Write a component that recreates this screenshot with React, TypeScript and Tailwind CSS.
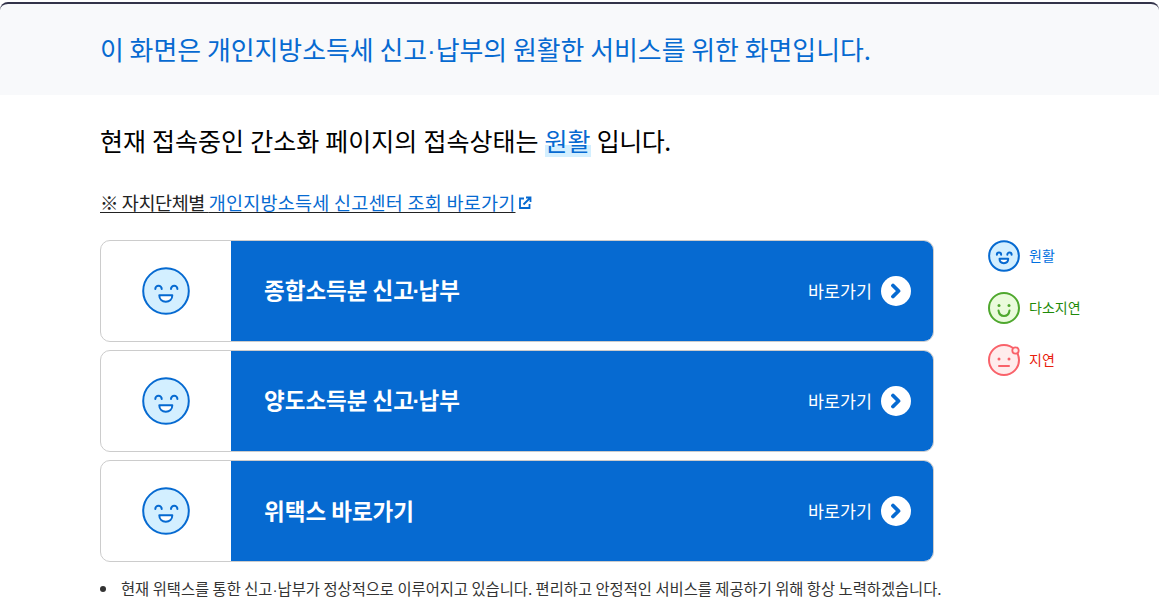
import React from "react";

const FONT = { fontFamily: '"Noto Sans CJK KR", "Noto Sans", sans-serif' };

function Dot({ tight = false }: { tight?: boolean }) {
  return <span className={tight ? "-mx-[1.500px] font-['Liberation_Sans']" : "font-['Liberation_Sans']"}>·</span>;
}

function Happy({ size, stroke = 2 }: { size: number; stroke?: number }) {
  return (
    <svg width={size} height={size} viewBox="0 0 48 48" fill="none">
      <circle cx="24" cy="24" r={24 - stroke / 2 - 0.2} fill="#d3efff" stroke="#066ad1" strokeWidth={stroke} />
      <path d="M13.300 22a3.200 3.200 0 0 1 6.400 0M29 22a3.200 3.200 0 0 1 6.400 0" stroke="#066ad1" strokeWidth={stroke} strokeLinecap="round" />
      <path d="M17.300 28.300h13c0 4-2.900 6.400-6.500 6.400s-6.500-2.400-6.500-6.400z" fill="#fff" stroke="#066ad1" strokeWidth={stroke} strokeLinejoin="round" />
    </svg>
  );
}

function Slow() {
  return (
    <svg width="32" height="32" viewBox="0 0 32 32" fill="none">
      <circle cx="16" cy="16" r="15" fill="#eafbdc" stroke="#4fa82e" strokeWidth="2" />
      <circle cx="11" cy="13.500" r="1.500" fill="#4fa82e" />
      <circle cx="21" cy="13.500" r="1.500" fill="#4fa82e" />
      <path d="M10.500 18.500c.5 3.500 2.800 5.500 5.500 5.500s5-2 5.500-5.500" stroke="#4fa82e" strokeWidth="2" strokeLinecap="round" />
    </svg>
  );
}

function Delay() {
  return (
    <svg width="32" height="32" viewBox="0 0 32 32" fill="none">
      <circle cx="16" cy="16" r="15" fill="#ffecec" stroke="#f9626a" strokeWidth="2" />
      <circle cx="11" cy="15" r="1.500" fill="#f9626a" />
      <circle cx="21" cy="15" r="1.500" fill="#f9626a" />
      <path d="M11 22h10" stroke="#f9626a" strokeWidth="2" strokeLinecap="round" />
      <circle cx="27.500" cy="6.500" r="3.200" fill="#ffecec" stroke="#f9626a" strokeWidth="1.800" />
    </svg>
  );
}

function Row({ title }: { title: React.ReactNode }) {
  return (
    <a className="flex h-[102px] w-[834px] overflow-hidden rounded-[10px] border border-[#cccccc] bg-white">
      <div className="flex w-[130px] shrink-0 items-center justify-center">
        <Happy size={48} />
      </div>
      <div className="flex flex-1 items-center justify-between bg-[#066ad1] -my-px -mr-px pl-[33px] pr-[23px] text-white">
        <span className="-mt-[2px] text-[22.500px] font-bold leading-[30px]">{title}</span>
        <span className="flex items-center gap-[9px]">
          <span className="text-[17.400px] leading-6">바로가기</span>
          <span className="flex h-[30px] w-[30px] items-center justify-center rounded-full bg-white">
            <svg width="14" height="16" viewBox="0 0 14 16" fill="none">
              <path d="M4 2.500 9.500 8 4 13.500" stroke="#066ad1" strokeWidth="3.800" strokeLinecap="round" strokeLinejoin="round" />
            </svg>
          </span>
        </span>
      </div>
    </a>
  );
}

function Legend({ icon, label, color }: { icon: React.ReactNode; label: string; color: string }) {
  return (
    <div className="flex h-8 items-center gap-[9px]">
      {icon}
      <span className={`-mt-[2px] text-[14px] leading-5 ${color}`}>{label}</span>
    </div>
  );
}

export default function App() {
  return (
    <div style={FONT} className="h-[606px] w-[1159px] overflow-hidden bg-white pt-[2px] text-black">
      <div className="flex h-[93px] items-center rounded-t-[8px] border-t-2 border-[#33334a] bg-[#f8f9fb] pl-[100px]">
        <p className="text-[25.900px] leading-9 text-[#066ad1]">
          이 화면은 개인지방소득세 신고<Dot />납부의 원활한 서비스를 위한 화면입니다.
        </p>
      </div>
      <div className="pl-[100px]">
        <p className="mt-[27px] text-[25px] leading-9 [word-spacing:0.5px]">
          현재 접속중인 간소화 페이지의 접속상태는{" "}
          <span className="bg-[linear-gradient(transparent_23px,#d3efff_23px,#d3efff_35px,transparent_35px)] text-[#066ad1]">원활</span>{" "}
          <span className="tracking-[-0.5px]">입니다.</span>
        </p>
        <p className="mt-[32px] flex items-center text-[18.500px] leading-6 text-[#222222]">
          <a className="underline underline-offset-2">
            <span className="tracking-[-0.4px]">※ 자치단체별 </span>
            <span className="tracking-[0.25px] text-[#066ad1]">개인지방소득세 신고센터 조회 바로가기</span>
          </a>
          <svg width="14" height="14" viewBox="0 0 14 14" fill="none" className="ml-[3px] mt-[2px]">
            <path d="M6 2.500H2v9.500h9.500V8" stroke="#066ad1" strokeWidth="1.800" />
            <path d="M5.500 8.500 12 2M8 1.500h4.500V6" stroke="#066ad1" strokeWidth="1.800" />
          </svg>
        </p>
        <div className="mt-[26px] flex">
          <div className="flex flex-col gap-2">
            <Row title={<>종합소득분 신고<Dot tight />납부</>} />
            <Row title={<>양도소득분 신고<Dot tight />납부</>} />
            <Row title="위택스 바로가기" />
          </div>
          <div className="ml-[54px] flex flex-col gap-5">
            <Legend icon={<Happy size={32} stroke={3} />} label="원활" color="text-[#0070e0]" />
            <Legend icon={<Slow />} label="다소지연" color="text-[#1f8a0a]" />
            <Legend icon={<Delay />} label="지연" color="text-[#e8200c]" />
          </div>
        </div>
        <ul className="mt-[16px] text-[15.350px] leading-5 text-[#333333]">
          <li className="flex items-center gap-[15px]">
            <span className="h-[6px] w-[6px] shrink-0 rounded-full bg-[#333333]" />
            <span>현재 위택스를 통한 신고<Dot />납부가 정상적으로 이루어지고 있습니다. 편리하고 안정적인 서비스를 제공하기 위해 항상 노력하겠습니다.</span>
          </li>
        </ul>
      </div>
    </div>
  );
}
